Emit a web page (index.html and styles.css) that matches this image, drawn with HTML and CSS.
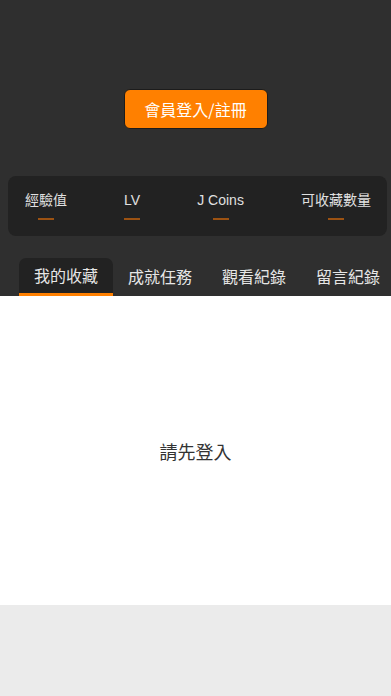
FILE: index.html
```html
<!DOCTYPE html>
<html lang="zh-Hant">
<head>
<meta charset="utf-8">
<link rel="stylesheet" href="styles.css">
</head>
<body>
<div class="page">
  <header class="hero">
    <button class="login-btn">會員登入/註冊</button>
  </header>
  <section class="stats">
    <div class="stats-card">
      <div class="stat"><span class="label">經驗值</span><span class="dash"></span></div>
      <div class="stat"><span class="label">LV</span><span class="dash"></span></div>
      <div class="stat"><span class="label">J Coins</span><span class="dash"></span></div>
      <div class="stat"><span class="label">可收藏數量</span><span class="dash"></span></div>
    </div>
  </section>
  <nav class="tabs">
    <div class="tab active">我的收藏</div>
    <div class="tab">成就任務</div>
    <div class="tab">觀看紀錄</div>
    <div class="tab">留言紀錄</div>
  </nav>
  <main class="content">
    <p class="notice">請先登入</p>
  </main>
  <footer class="bottom"></footer>
</div>
</body>
</html>
```
FILE: styles.css
```css
html, body {
  margin: 0;
  padding: 0;
}
body {
  font-family: "Noto Sans CJK TC", "Noto Sans", sans-serif;
  background: #ebebeb;
  width: 391px;
  height: 696px;
  overflow: hidden;
}
.page {
  display: flex;
  flex-direction: column;
  height: 696px;
}
.hero {
  background: #2f2f2f;
  height: 176px;
  display: flex;
  justify-content: center;
  align-items: flex-start;
}
.login-btn {
  margin-top: 89px;
  width: 144px;
  height: 40px;
  background: #ff8000;
  border: 1.5px solid #1c1c1c;
  border-radius: 6px;
  color: #fff;
  font-family: "Noto Sans CJK TC", sans-serif;
  font-size: 16px;
  padding: 0;
  line-height: 1;
}
.stats {
  background: #2f2f2f;
  padding: 0 4px 22px 8px;
}
.stats-card {
  background: #222;
  border-radius: 8px;
  height: 60px;
  display: flex;
  justify-content: space-between;
  align-items: flex-start;
  padding: 0 16px 0 17px;
}
.stat {
  display: flex;
  flex-direction: column;
  align-items: center;
  padding-top: 14px;
}
.label {
  color: #e0e0e0;
  font-size: 14px;
  line-height: 20px;
  font-family: "Liberation Sans", "Noto Sans CJK TC", sans-serif;
}
.dash {
  width: 16px;
  height: 2px;
  background: #9c5212;
  margin-top: 8px;
}
.tabs {
  background: #2f2f2f;
  display: flex;
  padding-left: 19px;
  height: 38px;
  overflow: hidden;
  white-space: nowrap;
}
.tab {
  flex: 0 0 94px;
  box-sizing: border-box;
  text-align: center;
  color: #e6e6e6;
  font-size: 16px;
  line-height: 36px;
  height: 38px;
}
.tab.active {
  background: #222;
  border-radius: 7px 7px 0 0;
  border-bottom: 3px solid #ff8000;
  line-height: 35px;
}
.content {
  background: #fff;
  height: 309px;
  display: flex;
  align-items: center;
  justify-content: center;
}
.notice {
  margin: 0;
  font-size: 18px;
  color: #333;
}
.bottom {
  flex: 1;
  background: #ebebeb;
}
```
